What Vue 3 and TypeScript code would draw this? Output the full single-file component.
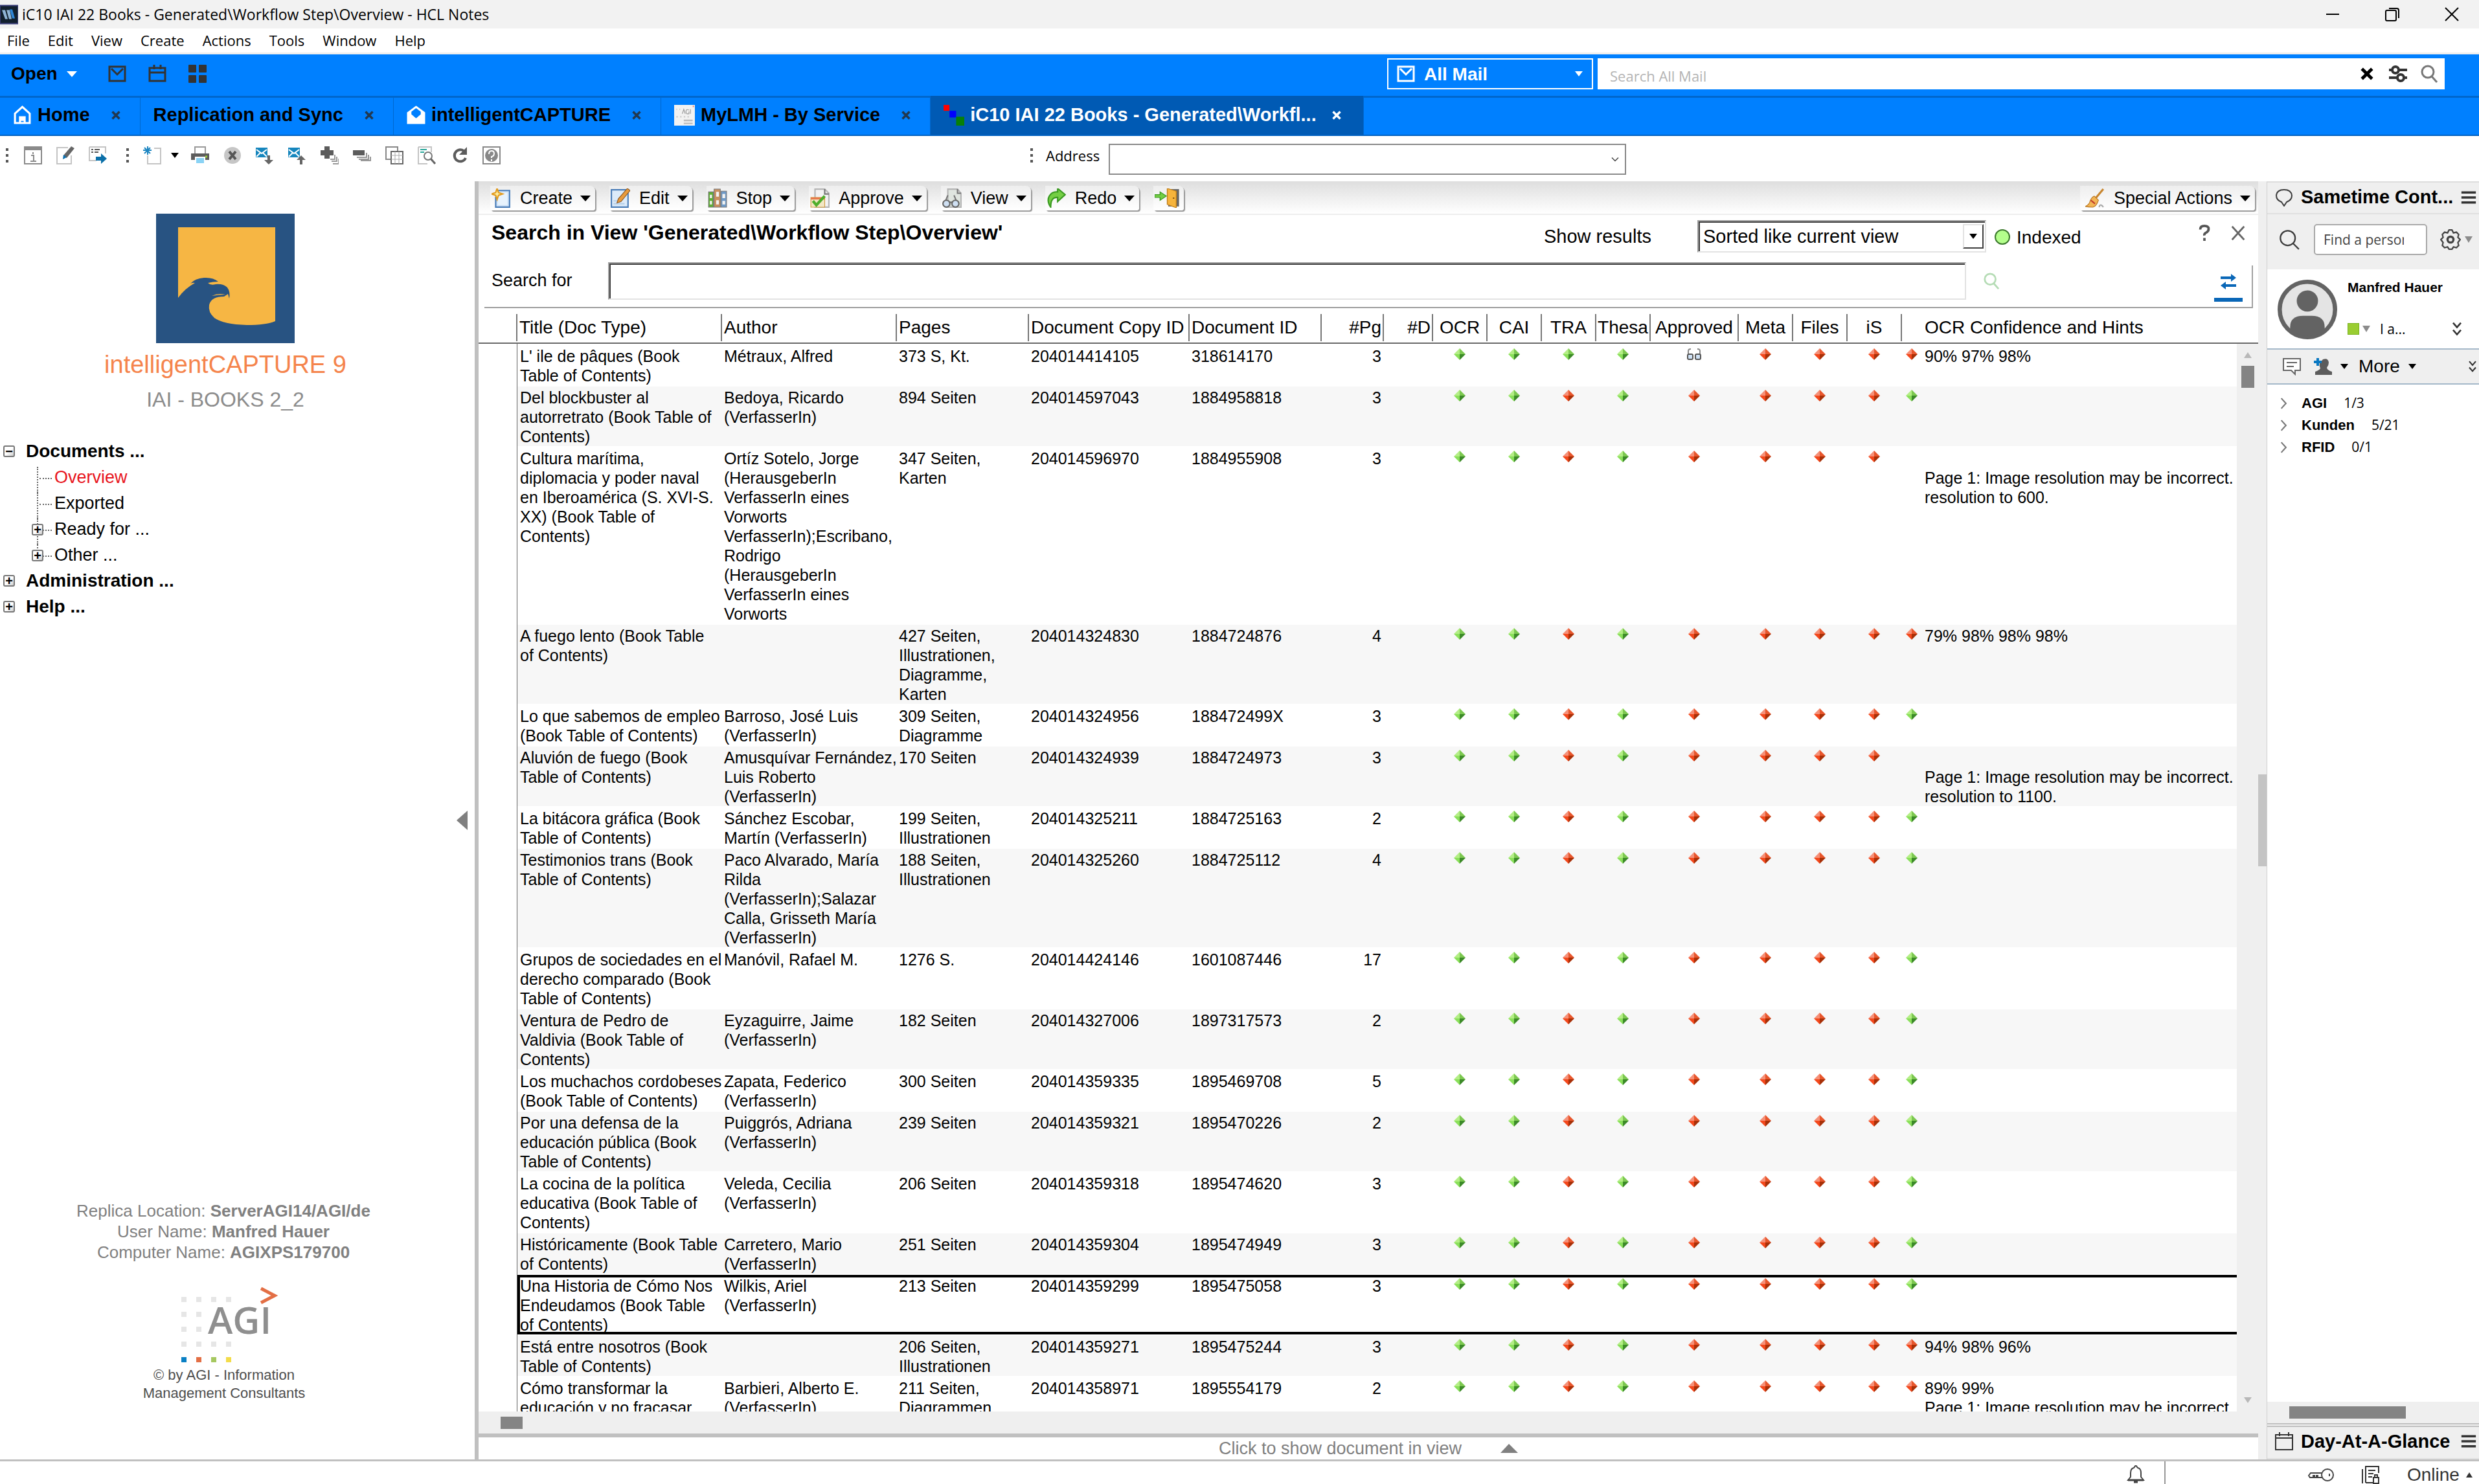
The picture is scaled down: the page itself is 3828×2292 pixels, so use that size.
<script setup lang="ts">
import { ref } from 'vue'

interface Tab { label: string; icon?: string; active?: boolean }
interface Action { label: string; icon: string }
interface Row {
  title: string; author: string; pages: string; copyId: string; docId: string
  pg: number; status: string; hints?: string; selected?: boolean
}

const menus = ['File', 'Edit', 'View', 'Create', 'Actions', 'Tools', 'Window', 'Help']

const tabs: Tab[] = [
  { label: 'Home', icon: 'home' },
  { label: 'Replication and Sync' },
  { label: 'intelligentCAPTURE', icon: 'openMail' },
  { label: 'MyLMH - By Service', icon: 'agiPage' },
  { label: 'iC10 IAI 22 Books - Generated\\Workfl...', icon: 'steps', active: true },
]

const tools = ['print', 'stop', 'mailDown', 'mailUp', 'plus', 'minus', 'copy', 'findDoc', 'reload', 'help']

const actions: Action[] = [
  { label: 'Create', icon: 'create' },
  { label: 'Edit', icon: 'editDoc' },
  { label: 'Stop', icon: 'binders' },
  { label: 'Approve', icon: 'approve' },
  { label: 'View', icon: 'viewDoc' },
  { label: 'Redo', icon: 'redo' },
]

const columns = [
  { label: '', width: 60 },
  { label: 'Title (Doc Type)', width: 316 },
  { label: 'Author', width: 270 },
  { label: 'Pages', width: 204 },
  { label: 'Document Copy ID', width: 248 },
  { label: 'Document ID', width: 204 },
  { label: '#Pg', width: 96, align: 'right' },
  { label: '#D', width: 76, align: 'right' },
  { label: 'OCR', width: 84, align: 'center' },
  { label: 'CAI', width: 84, align: 'center' },
  { label: 'TRA', width: 84, align: 'center' },
  { label: 'Thesa', width: 84, align: 'center' },
  { label: 'Approved', width: 136, align: 'center' },
  { label: 'Meta', width: 84, align: 'center' },
  { label: 'Files', width: 84, align: 'center' },
  { label: 'iS', width: 84, align: 'center' },
]

const usual = 'ggrgrrrrg'
const rows: Row[] = [
  { title: "L' ile de pâques (Book\nTable of Contents)", author: 'Métraux, Alfred', pages: '373 S, Kt.', copyId: '204014414105', docId: '318614170', pg: 3, status: 'ggggvrrrr', hints: '90% 97% 98%' },
  { title: 'Del blockbuster al\nautorretrato (Book Table of\nContents)', author: 'Bedoya, Ricardo\n(VerfasserIn)', pages: '894 Seiten', copyId: '204014597043', docId: '1884958818', pg: 3, status: usual },
  { title: 'Cultura marítima,\ndiplomacia y poder naval\nen Iberoamérica (S. XVI-S.\nXX) (Book Table of\nContents)', author: 'Ortíz Sotelo, Jorge\n(HerausgeberIn\nVerfasserIn eines\nVorworts\nVerfasserIn);Escribano,\nRodrigo\n(HerausgeberIn\nVerfasserIn eines\nVorworts', pages: '347 Seiten,\nKarten', copyId: '204014596970', docId: '1884955908', pg: 3, status: 'ggrgrrrr-', hints: '\nPage 1: Image resolution may be incorrect. P\nresolution to 600.' },
  { title: 'A fuego lento (Book Table\nof Contents)', author: '', pages: '427 Seiten,\nIllustrationen,\nDiagramme,\nKarten', copyId: '204014324830', docId: '1884724876', pg: 4, status: 'ggrgrrrrr', hints: '79% 98% 98% 98%' },
  { title: 'Lo que sabemos de empleo\n(Book Table of Contents)', author: 'Barroso, José Luis\n(VerfasserIn)', pages: '309 Seiten,\nDiagramme', copyId: '204014324956', docId: '188472499X', pg: 3, status: usual },
  { title: 'Aluvión de fuego (Book\nTable of Contents)', author: 'Amusquívar Fernández,\nLuis Roberto\n(VerfasserIn)', pages: '170 Seiten', copyId: '204014324939', docId: '1884724973', pg: 3, status: 'ggrgrrrr-', hints: '\nPage 1: Image resolution may be incorrect. P\nresolution to 1100.' },
  { title: 'La bitácora gráfica (Book\nTable of Contents)', author: 'Sánchez Escobar,\nMartín (VerfasserIn)', pages: '199 Seiten,\nIllustrationen', copyId: '204014325211', docId: '1884725163', pg: 2, status: usual },
  { title: 'Testimonios trans (Book\nTable of Contents)', author: 'Paco Alvarado, María\nRilda\n(VerfasserIn);Salazar\nCalla, Grisseth María\n(VerfasserIn)', pages: '188 Seiten,\nIllustrationen', copyId: '204014325260', docId: '1884725112', pg: 4, status: usual },
  { title: 'Grupos de sociedades en el\nderecho comparado (Book\nTable of Contents)', author: 'Manóvil, Rafael M.', pages: '1276 S.', copyId: '204014424146', docId: '1601087446', pg: 17, status: usual },
  { title: 'Ventura de Pedro de\nValdivia (Book Table of\nContents)', author: 'Eyzaguirre, Jaime\n(VerfasserIn)', pages: '182 Seiten', copyId: '204014327006', docId: '1897317573', pg: 2, status: usual },
  { title: 'Los muchachos cordobeses\n(Book Table of Contents)', author: 'Zapata, Federico\n(VerfasserIn)', pages: '300 Seiten', copyId: '204014359335', docId: '1895469708', pg: 5, status: usual },
  { title: 'Por una defensa de la\neducación pública (Book\nTable of Contents)', author: 'Puiggrós, Adriana\n(VerfasserIn)', pages: '239 Seiten', copyId: '204014359321', docId: '1895470226', pg: 2, status: usual },
  { title: 'La cocina de la política\neducativa (Book Table of\nContents)', author: 'Veleda, Cecilia\n(VerfasserIn)', pages: '206 Seiten', copyId: '204014359318', docId: '1895474620', pg: 3, status: usual },
  { title: 'Históricamente (Book Table\nof Contents)', author: 'Carretero, Mario\n(VerfasserIn)', pages: '251 Seiten', copyId: '204014359304', docId: '1895474949', pg: 3, status: usual },
  { title: 'Una Historia de Cómo Nos\nEndeudamos (Book Table\nof Contents)', author: 'Wilkis, Ariel\n(VerfasserIn)', pages: '213 Seiten', copyId: '204014359299', docId: '1895475058', pg: 3, status: usual, selected: true },
  { title: 'Está entre nosotros (Book\nTable of Contents)', author: '', pages: '206 Seiten,\nIllustrationen', copyId: '204014359271', docId: '1895475244', pg: 3, status: 'ggrgrrrrr', hints: '94% 98% 96%' },
  { title: 'Cómo transformar la\neducación y no fracasar', author: 'Barbieri, Alberto E.\n(VerfasserIn)', pages: '211 Seiten,\nDiagrammen', copyId: '204014358971', docId: '1895554179', pg: 2, status: 'ggrgrrrrr', hints: '89% 99%\nPage 1: Image resolution may be incorrect. P' },
]

const groups = [
  { name: 'AGI', count: '1/3' },
  { name: 'Kunden', count: '5/21' },
  { name: 'RFID', count: '0/1' },
]

const logoDots = [0, 1, 2, 3].flatMap(r => [0, 1, 2, 3]
  .filter(c => c < 2 || r === 0 || r === 3)
  .map(c => ({ x: c * 23, y: 15 + r * 23 })))
const logoColors = ['#0a80c4', '#e36f45', '#a6c860', '#f3dc4a']

const query = ref('')
const mailQuery = ref('')
const person = ref('')

/* Glyph bodies, all on a 28 x 28 grid */
const glyphs: Record<string, string> = {
  app: '<rect width="28" height="28" fill="#12202e" stroke="#3b3f7a" stroke-width="2"/><path d="M3 7h5l4 14H8zM10 7h5l3 14h-4z" fill="#8fb4d6"/><path d="M15 6h4l4 14h-4z" fill="#2f86d8"/>',
  mail: '<rect x="2" y="3" width="24" height="22" fill="none" stroke="currentColor" stroke-width="3"/><path d="M5 6l9 9 9-9" fill="none" stroke="currentColor" stroke-width="3"/>',
  calendar: '<path d="M2 5h24v20H2zM2 12h24" fill="none" stroke="currentColor" stroke-width="3"/><path d="M9 0v7M19 0v7" stroke="currentColor" stroke-width="3"/>',
  grid: '<rect width="12" height="12" rx="1" fill="currentColor"/><rect x="16" width="12" height="12" rx="1" fill="currentColor"/><rect y="16" width="12" height="12" rx="1" fill="currentColor"/><rect x="16" y="16" width="12" height="12" rx="1" fill="currentColor"/>',
  home: '<path d="M3 12L14 2l11 10v14H3z" fill="none" stroke="#fff" stroke-width="3"/><path d="M9 27V16h10v11h-3v-4h-4v4z" fill="#fff"/>',
  openMail: '<path d="M2 11L14 2l12 9v15H2z" fill="none" stroke="#fff" stroke-width="3"/><path d="M2 11l5-3v5l7 6 7-6V8l5 3v15H2z" fill="#fff"/>',
  agiPage: '<rect width="28" height="28" fill="#f2f2f2"/><path d="M11 12l2-6 2 6M20 7q-4-2-4 2t4 3V9M22 6v6" fill="none" stroke="#999" stroke-width="1"/><path d="M3 16h2M8 16h2M13 16h2M18 16h2M3 6h1M7 6h1" stroke="#ccc" stroke-width="2"/><path d="M13 21h12M13 25h12" stroke="#bbb" stroke-width="2"/><rect x="25" y="1" width="2" height="2" fill="#e98"/>',
  steps: '<rect width="8" height="8" fill="#f00"/><rect x="8" y="8" width="9" height="9" fill="#00f"/><rect x="17" y="16" width="11" height="12" fill="#078007"/>',
  info: '<rect x="1" y="1" width="26" height="26" fill="#fff" stroke="#8a8a8a" stroke-width="2"/><rect width="28" height="6" fill="#8a8a8a"/><path d="M11 14h4v9M10 23h9M14 9v3" fill="none" stroke="#8a8a8a" stroke-width="2"/>',
  pencil: '<path d="M18 2H1v25h22V14" fill="none" stroke="#c4c4c4" stroke-width="2"/><path d="M23 0l5 3-12 15-5-4z" fill="#666"/><path d="M11 13l5 4-6 3z" fill="#0a6fb0"/>',
  sendDoc: '<path d="M1 1h25v10M1 1v21h11" fill="none" stroke="#c4c4c4" stroke-width="2"/><path d="M4 5h3M9 5h8M4 9h3M9 9h6" stroke="#555" stroke-width="2"/><path d="M11 16h8v-5l9 8-9 8v-5h-8z" fill="#0a6fa8"/>',
  newDoc: '<path d="M17 3h10v24H7V14" fill="none" stroke="#c4c4c4" stroke-width="2"/><path d="M7 0v13M0 6h13M2 2l9 9M11 2l-9 9" stroke="#1a84c0" stroke-width="2"/>',
  print: '<path d="M6 1h16v11H6z" fill="#fff" stroke="#999" stroke-width="2"/><path d="M0 11h28v10H0z" fill="#5c5c5c"/><path d="M22 16h3" stroke="#9c3" stroke-width="3"/><path d="M7 17h14v10H7z" fill="#8ad3f5" stroke="#fff" stroke-width="2"/>',
  stop: '<circle cx="14" cy="14" r="13" fill="#c6c6c6"/><path d="M9 8l10 12M19 8L9 20" stroke="#555" stroke-width="4"/>',
  mailDown: '<path d="M0 2h18v15H0z" fill="#1686bd"/><path d="M1 5l8 6 8-6M1 16l6-6M17 16l-6-6" fill="none" stroke="#fff" stroke-width="2"/><path d="M18 14h4v7h5l-7 7-7-7h5z" fill="#666"/>',
  mailUp: '<path d="M0 2h18v15H0z" fill="#1686bd"/><path d="M1 5l8 6 8-6M1 16l6-6M17 16l-6-6" fill="none" stroke="#fff" stroke-width="2"/><path d="M18 28h4v-7h5l-7-7-7 7h5z" fill="#666"/>',
  plus: '<path d="M6 0h8v6h6v8h-6v5H6v-5H0V6h6z" fill="#5c5c5c"/><path d="M22 13v7h-7M25 16v7h-8M28 19v8h-9" fill="none" stroke="#999" stroke-width="2"/>',
  minus: '<path d="M0 6h18v8H0z" fill="#5c5c5c"/><path d="M21 10v7H6M24 13v7H9M27 16v6H12" fill="none" stroke="#999" stroke-width="2"/>',
  copy: '<path d="M1 1h18v19H1z" fill="#fff" stroke="#888" stroke-width="2"/><path d="M9 8h18v19H9z" fill="#fff" stroke="#666" stroke-width="2"/><path d="M9 14h18M9 20h18M15 8v19M21 8v19" stroke="#aaa" stroke-width="1"/>',
  findDoc: '<path d="M1 1h20v8M1 1v26h14" fill="none" stroke="#c4c4c4" stroke-width="2"/><path d="M4 5h10M4 9h6" stroke="#2aa79a" stroke-width="2"/><circle cx="16" cy="15" r="6" fill="#fff" stroke="#777" stroke-width="2"/><path d="M20 19l7 8" stroke="#666" stroke-width="3"/>',
  reload: '<path d="M21 7a9 9 0 1 0 3 11" fill="none" stroke="#5c5c5c" stroke-width="4"/><path d="M26 1v12H14z" fill="#5c5c5c"/>',
  help: '<rect x="1" y="1" width="26" height="26" fill="#fff" stroke="#888" stroke-width="2"/><circle cx="14" cy="14" r="10" fill="#888"/><path d="M10 12q0-5 4-5t4 4-4 5v2M14 20v3" fill="none" stroke="#fff" stroke-width="2"/>',
  create: '<path d="M8 3h18v24H6V12" fill="#cfe3f8" stroke="#4a7db8" stroke-width="2"/><path d="M9 6h14v18H9z" fill="#e8f3fd"/><path d="M8 0l2 6 6 2-6 2-2 6-2-6-6-2 6-2z" fill="#fff2a8" stroke="#e29a1c" stroke-width="2"/>',
  editDoc: '<path d="M1 2h24v25H1z" fill="#dcebfa" stroke="#4a7db8" stroke-width="2"/><path d="M4 22h16M4 18h6" stroke="#b5cfe8" stroke-width="2"/><path d="M24 0l4 3-13 16-6 2 2-6z" fill="#e89b3d" stroke="#8a5620" stroke-width="1"/>',
  binders: '<path d="M1 5h7v22H1z" fill="#5fae35" stroke="#777"/><path d="M9 1h9v26H9z" fill="#c98f5e" stroke="#777"/><path d="M19 4h8v23h-8z" fill="#6f9ac7" stroke="#777"/><path d="M3 9h3v5H3zM12 5h4v7h-4zM21 8h4v6h-4zM3 18h3v5H3zM12 17h4v6h-4zM21 18h4v5h-4z" fill="#f3f3f3"/>',
  approve: '<path d="M7 1h14l6 6v20H7z" fill="#f3f3f3" stroke="#b5b5b5" stroke-width="2"/><path d="M21 1v7h6" fill="none" stroke="#777" stroke-width="2"/><path d="M1 13h20v14H1z" fill="#f2e7c4" stroke="#cf9a3c" stroke-width="1"/><path d="M1 13h20v3H1z" fill="#e77a4c"/><path d="M4 18l5 6L21 11" fill="none" stroke="#4fae2c" stroke-width="4"/>',
  viewDoc: '<path d="M8 1h14l5 6v20H8z" fill="#dfe5df" stroke="#b5b5b5" stroke-width="2"/><path d="M22 1v6h5" fill="none" stroke="#777" stroke-width="2"/><path d="M4 20l4-10M21 20l-4-10" stroke="#777" stroke-width="2"/><circle cx="6" cy="22" r="5" fill="#cfe0f3" stroke="#666" stroke-width="2"/><circle cx="19" cy="22" r="5" fill="#cfe0f3" stroke="#666" stroke-width="2"/><path d="M11 20h3" stroke="#666" stroke-width="2"/>',
  redo: '<path d="M6 27Q0 18 4 11t12-6V0l11 9-11 10v-6Q6 12 6 27z" fill="#74ce44" stroke="#3b9a22" stroke-width="2"/>',
  exit: '<path d="M15 1h12v25H15z" fill="#666"/><path d="M14 0l10 4v24l-10-5z" fill="#f6b43c" stroke="#c07d16" stroke-width="1"/><circle cx="21" cy="14" r="1" fill="#7a4b0c"/><path d="M0 9h6V5l7 6-7 6v-4H0z" fill="#74ce44" stroke="#3b9a22" stroke-width="1"/>',
  broom: '<path d="M26 1L15 14" stroke="#c8862f" stroke-width="3"/><path d="M13 11l6 6q-3 9-8 10-7 0-11-1 6-3 7-8 2-5 6-7z" fill="#f3b555" stroke="#b87722" stroke-width="1"/><path d="M8 17l6 5" stroke="#c0392b" stroke-width="2"/><path d="M20 27q1-4 3-3t3 3" fill="none" stroke="#aaa" stroke-width="2"/>',
  search: '<circle cx="12" cy="11" r="9" fill="none" stroke="currentColor" stroke-width="3"/><path d="M18 18l8 9" stroke="currentColor" stroke-width="3"/>',
  thinSearch: '<circle cx="12" cy="12" r="10" fill="none" stroke="#3c3c3c" stroke-width="2"/><path d="M19 19l8 8" stroke="#3c3c3c" stroke-width="2"/>',
  sliders: '<path d="M0 8h28M0 20h28" stroke="currentColor" stroke-width="4"/><circle cx="10" cy="8" r="5" fill="#fff" stroke="currentColor" stroke-width="4"/><circle cx="18" cy="20" r="5" fill="#fff" stroke="currentColor" stroke-width="4"/>',
  swap: '<path d="M2 8h20M6 20h20" stroke="#0a67b7" stroke-width="4"/><path d="M18 2l8 6-8 6zM10 14l-8 6 8 6z" fill="#0a67b7"/>',
  cross: '<path d="M3 3l22 22M25 3L3 25" stroke="currentColor" stroke-width="7"/>',
  thinCross: '<path d="M4 3l20 22M24 3L4 25" stroke="currentColor" stroke-width="3"/>',
  closeWin: '<path d="M4 4l20 20M24 4L4 24" stroke="#000" stroke-width="2"/>',
  minWin: '<path d="M4 14h20" stroke="#000" stroke-width="2"/>',
  maxWin: '<rect x="4" y="8" width="16" height="16" rx="2" fill="none" stroke="#000" stroke-width="2"/><path d="M9 5h12q3 0 3 3v12" fill="none" stroke="#000" stroke-width="2"/>',
  question: '<path d="M7 8q0-6 7-6t7 5q0 4-4 6t-3 5M14 22v5" fill="none" stroke="#555" stroke-width="4"/>',
  bubble: '<path d="M14 27l-4-6Q2 18 2 11 3 2 14 2t12 9q0 7-8 10z" fill="none" stroke="#3c3c3c" stroke-width="2"/>',
  burger: '<path d="M1 5h26M1 14h26M1 23h26" stroke="#333" stroke-width="4"/>',
  gear: '<path d="M10 5l2-4h4l2 4 4-1 3 3-1 4 3 3-3 4 1 4-3 3-4-1-2 3h-4l-2-3-4 1-3-3 1-4-3-4 3-3-1-4 3-3z" fill="none" stroke="#444" stroke-width="2"/><circle cx="14" cy="14" r="4" fill="none" stroke="#444" stroke-width="3"/>',
  chat: '<path d="M1 2h26v18h-8v6l-6-6H1z" fill="#fff" stroke="#666" stroke-width="2"/><path d="M6 8h16M6 14h11" stroke="#666" stroke-width="2"/>',
  addPerson: '<path d="M14 3q8-3 9 5 0 4-3 8 1 4 8 6v5H2v-5q6-2 8-5-2-4-1-8z" fill="#5c5c5c"/><path d="M6 1v12M0 7h12" stroke="#0a78c2" stroke-width="4"/>',
  downs: '<path d="M7 3l7 8 7-8M7 16l7 8 7-8" fill="none" stroke="#333" stroke-width="3"/>',
  right: '<path d="M8 3l10 11L8 25" fill="none" stroke="#777" stroke-width="3"/>',
  thinDown: '<path d="M4 9l10 10L24 9" fill="none" stroke="#444" stroke-width="3"/>',
  calThin: '<path d="M1 4h26v23H1zM1 9h26M7 0v6M21 0v6" fill="none" stroke="#333" stroke-width="2"/>',
  bell: '<path d="M2 23h24l-4-5V12q0-7-5-8l-3-4-3 4q-5 1-5 8v6z" fill="#fff" stroke="#444" stroke-width="2"/><path d="M2 23h24M11 26h6" stroke="#444" stroke-width="3"/>',
  key: '<circle cx="30" cy="11" r="9" fill="none" stroke="#444" stroke-width="2"/><path d="M21 8H4l-3 4 2 3h5v-3h2v3h3v-3h2v3h7" fill="none" stroke="#444" stroke-width="2"/><path d="M33 9v4" stroke="#444" stroke-width="2"/>',
  note: '<path d="M2 5v22M7 26V1h20v10M7 26h11" fill="none" stroke="#333" stroke-width="2"/><path d="M11 7h11M11 12h8M11 17h6" stroke="#333" stroke-width="2"/><path d="M19 18h8v9h-8zM21 18v-4h4v4" fill="none" stroke="#333" stroke-width="2"/>',
  avatar: '<circle cx="14" cy="14" r="13" fill="#e4e4e4" stroke="#636363" stroke-width="2"/><circle cx="14" cy="10" r="5" fill="#636363"/><path d="M6 24q-1-7 6-7h4q7 0 6 7-8 5-16 0z" fill="#636363"/>',
}
</script>

<template>
  <div class="window">
    <header class="titlebar">
      <svg class="app-icon" viewBox="0 0 28 28" v-html="glyphs.app" />
      <span class="window-title">iC10 IAI 22 Books - Generated\Workflow Step\Overview - HCL Notes</span>
      <div class="window-buttons">
        <button aria-label="Minimize"><svg class="g28" viewBox="0 0 28 28" v-html="glyphs.minWin" /></button>
        <button aria-label="Restore"><svg class="g28" viewBox="0 0 28 28" v-html="glyphs.maxWin" /></button>
        <button aria-label="Close"><svg class="g28" viewBox="0 0 28 28" v-html="glyphs.closeWin" /></button>
      </div>
    </header>

    <nav class="menubar">
      <button v-for="m in menus" :key="m">{{ m }}</button>
    </nav>

    <div class="openbar">
      <button class="open">Open <i class="tri white" /></button>
      <div class="quick">
        <button aria-label="Mail"><svg class="g28" viewBox="0 0 28 28" v-html="glyphs.mail" /></button>
        <button aria-label="Calendar"><svg class="g28" viewBox="0 0 28 28" v-html="glyphs.calendar" /></button>
        <button aria-label="Workspace"><svg class="g28" viewBox="0 0 28 28" v-html="glyphs.grid" /></button>
      </div>
      <div class="scope">
        <svg class="g28" viewBox="0 0 28 28" v-html="glyphs.mail" />
        <select aria-label="Search scope"><option>All Mail</option></select>
        <i class="tri small white" />
      </div>
      <div class="mail-search">
        <input v-model="mailQuery" type="text" placeholder="Search All Mail" aria-label="Search All Mail">
        <button class="clear" aria-label="Clear"><svg class="g20" viewBox="0 0 28 28" v-html="glyphs.cross" /></button>
        <button class="opts" aria-label="Search options"><svg class="g28" viewBox="0 0 28 28" v-html="glyphs.sliders" /></button>
        <button class="go" aria-label="Search"><svg class="g28" viewBox="0 0 28 28" v-html="glyphs.search" /></button>
      </div>
    </div>

    <nav class="tabs">
      <div v-for="t in tabs" :key="t.label" class="tab" :class="{ active: t.active }">
        <svg v-if="t.icon" class="tab-icon" :class="t.icon" viewBox="0 0 28 28" v-html="glyphs[t.icon]" />
        <a href="#">{{ t.label }}</a>
        <button aria-label="Close tab"><svg class="g14" viewBox="0 0 28 28" v-html="glyphs.cross" /></button>
      </div>
    </nav>

    <div class="toolbar">
      <i class="grip" />
      <div class="tool-group">
        <button aria-label="Properties"><svg class="g28" viewBox="0 0 28 28" v-html="glyphs.info" /></button>
        <button aria-label="Edit"><svg class="g28" viewBox="0 0 28 28" v-html="glyphs.pencil" /></button>
        <button aria-label="Forward"><svg class="g28" viewBox="0 0 28 28" v-html="glyphs.sendDoc" /></button>
      </div>
      <i class="grip" />
      <button class="new-doc" aria-label="New"><svg class="g28" viewBox="0 0 28 28" v-html="glyphs.newDoc" /><i class="tri small" /></button>
      <div class="tool-group">
        <button v-for="t in tools" :key="t" :aria-label="t"><svg class="g28" viewBox="0 0 28 28" v-html="glyphs[t]" /></button>
      </div>
      <div class="address">
        <i class="grip" />
        <label for="address">Address</label>
        <div class="address-box">
          <select id="address"><option value="" /></select>
          <svg class="g14" viewBox="0 0 28 28" v-html="glyphs.thinDown" />
        </div>
      </div>
    </div>

    <div class="workspace">
      <aside class="sidebar">
        <div class="side-content">
          <svg class="brand" viewBox="0 0 214 200">
            <rect width="214" height="200" fill="#285382" />
            <path d="M34 21H184V166Q170 172 140 172Q104 171 90 161Q80 152 82 141Q85 128 105 128L111 124L113 131Q115 121 110 114Q104 108 92 109Q84 111 80 107Q88 105 96 105Q88 98 74 99Q60 100 53 108Q57 106 60 107Q45 115 34 130Z" fill="#f6b644" />
            <path d="M86 127Q96 122 107 125Q97 125 86 127Z" fill="#f6b644" />
          </svg>
          <h1>intelligentCAPTURE 9</h1>
          <p class="subtitle">IAI - BOOKS 2_2</p>
          <ul class="tree">
            <li class="top"><button class="box" aria-label="Collapse">−</button><a href="#">Documents ...</a></li>
            <li class="sub"><i class="twig" /><a href="#" class="current">Overview</a></li>
            <li class="sub"><i class="twig" /><a href="#">Exported</a></li>
            <li class="sub"><i class="twig" /><button class="box" aria-label="Expand">+</button><a href="#">Ready for ...</a></li>
            <li class="sub last"><i class="twig" /><button class="box" aria-label="Expand">+</button><a href="#">Other ...</a></li>
            <li class="top"><button class="box" aria-label="Expand">+</button><a href="#">Administration ...</a></li>
            <li class="top"><button class="box" aria-label="Expand">+</button><a href="#">Help ...</a></li>
          </ul>
          <div class="side-info">
            <p>Replica Location: <b>ServerAGI14/AGI/de</b></p>
            <p>User Name: <b>Manfred Hauer</b></p>
            <p>Computer Name: <b>AGIXPS179700</b></p>
          </div>
          <svg class="agi" viewBox="0 0 148 116">
            <rect v-for="(d, i) in logoDots" :key="i" :x="d.x" :y="d.y" width="8" height="8" fill="#e6e6e6" />
            <rect v-for="(c, i) in logoColors" :key="c" :x="i * 23" y="108" width="8" height="8" :fill="c" />
            <text x="41" y="72" font-family="Open Sans, sans-serif" font-size="58" font-weight="600" fill="#8f8f8f">AGI</text>
            <path d="M123 2L144 13L123 24" fill="none" stroke="#e36f45" stroke-width="5" />
          </svg>
          <p class="copyright">© by AGI - Information<br>Management Consultants</p>
        </div>
        <button class="collapse" aria-label="Collapse navigator"><svg width="17" height="30" viewBox="0 0 17 30"><path d="M17 0v30L0 15z" fill="#808080" /></svg></button>
      </aside>

      <main class="main">
        <div class="actionbar">
          <button v-for="a in actions" :key="a.label" class="action">
            <svg class="act-icon" viewBox="0 0 28 28" v-html="glyphs[a.icon]" />{{ a.label }}<i class="tri" />
          </button>
          <button class="action exit" aria-label="Exit"><svg class="act-icon" viewBox="0 0 28 28" preserveAspectRatio="none" v-html="glyphs.exit" /></button>
          <button class="action special"><svg class="act-icon" viewBox="0 0 28 28" v-html="glyphs.broom" />Special Actions<i class="tri" /></button>
        </div>

        <section class="search-panel">
          <div class="search-top">
            <h2>Search in View 'Generated\Workflow Step\Overview'</h2>
            <label for="sort" class="show">Show results</label>
            <div class="sort-box">
              <select id="sort"><option>Sorted like current view</option></select>
              <span class="drop"><i class="tri small" /></span>
            </div>
            <i class="indexed-dot" />
            <span class="indexed">Indexed</span>
            <button aria-label="Help" class="hint"><svg class="g26" viewBox="0 0 28 28" v-html="glyphs.question" /></button>
            <button aria-label="Close search" class="close"><svg class="g26" viewBox="0 0 28 28" v-html="glyphs.thinCross" /></button>
          </div>
          <div class="search-bottom">
            <label for="query">Search for</label>
            <input id="query" v-model="query" type="text">
            <button class="find" aria-label="Find"><svg class="g26" viewBox="0 0 28 28" v-html="glyphs.search" /></button>
            <div class="toggle-zone">
              <button aria-label="More options"><svg class="g28" viewBox="0 0 28 28" v-html="glyphs.swap" /></button>
            </div>
          </div>
        </section>

        <div class="view">
          <div class="table-clip">
            <table>
              <colgroup>
                <col v-for="(c, i) in columns" :key="i" :style="{ width: c.width + 'px' }">
                <col class="conf-col">
                <col>
              </colgroup>
              <thead>
                <tr>
                  <th v-for="(c, i) in columns" :key="i" :class="c.align"><div>{{ c.label }}</div></th>
                  <th />
                  <th>OCR Confidence and Hints</th>
                </tr>
              </thead>
              <tbody>
                <tr v-for="r in rows" :key="r.copyId" :class="{ selected: r.selected }">
                  <td class="gutter" />
                  <td class="title">{{ r.title }}</td>
                  <td>{{ r.author }}</td>
                  <td>{{ r.pages }}</td>
                  <td>{{ r.copyId }}</td>
                  <td>{{ r.docId }}</td>
                  <td class="right">{{ r.pg }}</td>
                  <td />
                  <td v-for="(s, i) in r.status.split('')" :key="i" class="state">
                    <svg v-if="s === 'g'" width="18" height="18" viewBox="0 0 18 18"><path d="M9 0v9H0z" fill="#b4ee86" /><path d="M9 0l9 9H9z" fill="#7cc850" /><path d="M0 9h9v9z" fill="#8ae05a" /><path d="M9 9h9l-9 9z" fill="#3c8a28" /></svg>
                    <svg v-else-if="s === 'r'" width="18" height="18" viewBox="0 0 18 18"><path d="M9 0v9H0z" fill="#f59078" /><path d="M9 0l9 9H9z" fill="#e8562c" /><path d="M0 9h9v9z" fill="#f4481c" /><path d="M9 9h9l-9 9z" fill="#a83008" /></svg>
                    <svg v-else-if="s === 'v'" width="22" height="18" viewBox="0 0 22 18"><path d="M2 10V4q0-3 4-3M20 10V4q0-3-4-3" fill="none" stroke="#888" stroke-width="2" /><rect x="1" y="9" width="8" height="8" rx="2" fill="#cfe2f6" stroke="#555" stroke-width="2" /><rect x="13" y="9" width="8" height="8" rx="2" fill="#cfe2f6" stroke="#555" stroke-width="2" /></svg>
                  </td>
                  <td class="hints">{{ r.hints }}</td>
                </tr>
              </tbody>
            </table>
          </div>
          <div class="vrail">
            <div class="rail-head" />
            <div class="rail">
              <i class="tri pale up" />
              <i class="thumb" />
              <i class="tri pale" />
            </div>
          </div>
        </div>
        <div class="hrail"><i /></div>
        <button class="show-doc">Click to show document in view <svg width="27" height="14" viewBox="0 0 27 14"><path d="M0 14L13 0l14 14z" fill="#808080" /></svg></button>
      </main>

      <div class="splitter"><i /></div>

      <aside class="sametime">
        <div class="pane-head">
          <svg class="g28" viewBox="0 0 28 28" v-html="glyphs.bubble" />
          <h3>Sametime Cont...</h3>
          <button aria-label="Pane menu"><svg class="g24" viewBox="0 0 28 28" v-html="glyphs.burger" /></button>
        </div>
        <div class="person-search">
          <svg class="g32" viewBox="0 0 28 28" v-html="glyphs.thinSearch" />
          <input v-model="person" type="text" placeholder="Find a person" aria-label="Find a person">
          <button aria-label="Settings"><svg class="g32" viewBox="0 0 28 28" v-html="glyphs.gear" /><i class="tri grey" /></button>
        </div>
        <div class="me">
          <svg class="avatar" viewBox="0 0 28 28" v-html="glyphs.avatar" />
          <div class="me-text">
            <b>Manfred Hauer</b>
            <div class="presence"><i class="square" /><i class="tri grey" /><span>I a...</span><svg class="g24" viewBox="0 0 28 28" v-html="glyphs.downs" /></div>
          </div>
        </div>
        <div class="pane-tools">
          <button aria-label="Chat"><svg class="g28" viewBox="0 0 28 28" v-html="glyphs.chat" /></button>
          <button class="add" aria-label="Add contact"><svg class="g28" viewBox="0 0 28 28" v-html="glyphs.addPerson" /><i class="tri small" /></button>
          <button class="more">More<i class="tri small" /></button>
          <svg class="g20" viewBox="0 0 28 28" v-html="glyphs.downs" />
        </div>
        <ul class="groups">
          <li v-for="g in groups" :key="g.name"><svg class="g20" viewBox="0 0 28 28" v-html="glyphs.right" /><b>{{ g.name }}</b><span>{{ g.count }}</span></li>
        </ul>
        <div class="pane-scroll"><i /></div>
        <div class="pane-head day">
          <svg class="g28" viewBox="0 0 28 28" v-html="glyphs.calThin" />
          <h3>Day-At-A-Glance</h3>
          <button aria-label="Pane menu"><svg class="g24" viewBox="0 0 28 28" v-html="glyphs.burger" /></button>
        </div>
      </aside>
    </div>

    <footer class="status">
      <button class="bell" aria-label="Notifications"><svg class="g28" viewBox="0 0 28 28" v-html="glyphs.bell" /></button>
      <div class="status-right">
        <svg class="key" viewBox="0 0 40 22" v-html="glyphs.key" />
        <svg class="g28" viewBox="0 0 28 28" v-html="glyphs.note" />
        <button class="online">Online<i class="tri up-small" /></button>
      </div>
    </footer>
  </div>
</template>

<style>
html, body { margin: 0; background: #fff; }
</style>

<style scoped>
.window { display: flex; flex-direction: column; height: 100vh; overflow: hidden; background: #fff; color: #000; font-family: "Liberation Sans", Arial, sans-serif; font-size: 25px; }
.window *, .window *::before, .window *::after { box-sizing: border-box; }
button { display: flex; align-items: center; margin: 0; padding: 0; border: 0; background: none; color: inherit; font: inherit; white-space: nowrap; }
select, input { font: inherit; color: inherit; appearance: none; border: 0; border-radius: 0; background: none; padding: 0; margin: 0; min-width: 0; outline: 0; }
a { color: inherit; text-decoration: none; }
p, h1, h2, h3, ul { margin: 0; padding: 0; list-style: none; }
svg { display: block; flex: none; }
.g14 { width: 14px; height: 14px; }
.g20 { width: 20px; height: 20px; }
.g24 { width: 24px; height: 24px; }
.g26 { width: 26px; height: 26px; }
.g28 { width: 28px; height: 28px; }
.g32 { width: 32px; height: 32px; }
.tri { flex: none; width: 0; height: 0; border: 8px solid transparent; border-top: 9px solid #000; border-bottom: 0; }
.tri.small { border-width: 8px 6px 0; }
.tri.white { border-top-color: #fff; }
.tri.grey { border-width: 10px 6px 0; border-top-color: #8c8c8c; }
.tri.pale { border-width: 9px 6px 0; border-top-color: #b8b8b8; }
.tri.up { border-width: 0 6px 9px; border-bottom: 9px solid #b8b8b8; border-top: 0; }
.tri.up-small { border-width: 0 5px 8px; border-bottom: 8px solid #333; border-top: 0; }

.titlebar { display: flex; align-items: center; flex: none; height: 44px; background: #f2f2f2; font-family: "Open Sans", "Noto Sans", sans-serif; font-size: 23px; }
.app-icon { width: 28px; height: 31px; margin-right: 6px; }
.window-title { flex: 1; line-height: 44px; }
.window-buttons { display: flex; gap: 64px; padding-right: 28px; height: 40px; }

.menubar { display: flex; flex: none; gap: 28px; height: 40px; padding: 0 11px 2px; border-bottom: 3px solid #efefef; font-family: "Open Sans", "Noto Sans", sans-serif; font-size: 22px; }

.openbar { display: flex; align-items: center; flex: none; height: 64px; padding: 0 53px 4px 17px; background: #0080ff; font-size: 28px; font-weight: 700; }
.open { gap: 14px; }
.quick { display: flex; flex: 1; gap: 34px; margin-left: 48px; color: #333; }
.scope { display: flex; align-items: center; flex: none; width: 318px; height: 48px; padding: 0 14px 0 13px; border: 2px solid #fff; color: #fff; }
.scope select { flex: 1; margin-left: 14px; }
.mail-search { display: flex; align-items: center; flex: 0 0 1308px; height: 48px; margin-left: 7px; padding-right: 10px; background: #fff; color: #333; font-family: "Open Sans", "Noto Sans", sans-serif; font-size: 22px; font-weight: 400; }
.mail-search input { flex: 1; padding: 6px 19px 0; }
.mail-search input::placeholder { color: #b4b4b4; opacity: 1; }
.clear { color: #000; }
.opts { margin-left: 24px; }
.go { margin-left: 20px; color: #777; }

.tabs { display: flex; flex: none; height: 62px; background: #0080ff; border-top: 3px solid #0067cd; border-bottom: 2px solid #0060c0; font-size: 29px; font-weight: 700; }
.tab { display: flex; align-items: center; padding: 0 30px 4px 20px; border-right: 1px solid #0067cd; }
.tab a { margin-right: 33px; white-space: nowrap; }
.tab button { color: #22384f; }
.tab-icon { width: 29px; height: 29px; margin-right: 9px; }
.tab-icon.agiPage, .tab-icon.steps { width: 32px; height: 32px; }
.tab.active { background: #005ab4; color: #fff; margin-top: -3px; padding: 3px 34px 4px 20px; }
.tab.active a { margin-right: 24px; }
.tab.active button { color: #fff; }

.toolbar { display: flex; align-items: center; flex: none; height: 70px; padding: 0 0 10px 9px; }
.grip { flex: none; width: 4px; height: 22px; background: repeating-linear-gradient(#555 0 4px, transparent 4px 9px); }
.tool-group { display: flex; gap: 22px; margin: 0 30px 0 24px; }
.new-doc { gap: 15px; margin-left: 22px; margin-right: -5px; }
.address { display: flex; align-items: center; flex: none; margin-left: 788px; font-family: "Open Sans", "Noto Sans", sans-serif; font-size: 22px; }
.address label { margin: 0 14px 0 20px; }
.address-box { display: flex; align-items: center; width: 799px; height: 48px; margin-top: 12px; padding-right: 8px; border: 2px solid #8a8a8a; }
.address-box select { flex: 1; height: 100%; }

.workspace { display: flex; flex: 1; min-height: 0; }
.sidebar { display: flex; align-items: center; flex: none; width: 739px; border-right: 6px solid #c0c0c0; }
.side-content { display: flex; flex-direction: column; align-items: center; flex: 1; height: 100%; padding: 50px 0 88px; }
.collapse { width: 28px; margin-left: 9px; }
.brand { width: 214px; height: 200px; }
.side-content h1 { margin-top: 11px; font-size: 38px; line-height: 44px; font-weight: 400; color: #f5844c; }
.subtitle { margin-top: 12px; font-size: 32px; line-height: 40px; color: #8c8c8c; }
.tree { align-self: stretch; margin-top: 40px; font-size: 27px; line-height: 40px; }
.tree li { display: flex; align-items: center; height: 40px; }
.tree .top { padding-left: 5px; font-size: 28px; font-weight: 700; }
.tree .top .box { margin-right: 17px; }
.tree .sub { position: relative; padding-left: 84px; }
.box { justify-content: center; width: 18px; height: 18px; border: 2px solid #777; border-radius: 3px; background: linear-gradient(135deg, #fff 50%, #ccc); font-size: 20px; font-weight: 700; line-height: 14px; }
.sub .box { position: absolute; left: 49px; top: 12px; }
.twig { position: absolute; left: 57px; top: 4px; width: 22px; height: 40px; border-left: 2px dotted #666; }
.sub.last .twig { height: 14px; }
.twig::after { content: ""; position: absolute; left: 2px; top: 17px; width: 19px; border-top: 2px dotted #666; }
.current { color: #e8141c; }
.side-info { margin-top: auto; padding-right: 6px; font-size: 26px; line-height: 32px; text-align: center; color: #808080; }
.agi { width: 148px; height: 116px; margin: 38px 0 6px 12px; overflow: visible; }
.copyright { padding-right: 4px; font-size: 22px; line-height: 28px; text-align: center; color: #4d4d4d; }

.main { display: flex; flex-direction: column; flex: 1; min-width: 0; }
.actionbar { display: flex; align-items: center; gap: 22px; flex: none; height: 52px; padding: 0 5px 0 18px; border-bottom: 2px solid #eee; background: linear-gradient(#dedede, #fff); font-size: 27px; }
.action { height: 38px; margin-top: 2px; padding: 0 7px 0 2px; border-radius: 0 8px 4px 4px; background: linear-gradient(#eee, #fff); box-shadow: 2px 2px 1px #999; }
.action .tri { margin-left: 12px; }
.act-icon { width: 30px; height: 30px; margin-right: 14px; }
.action.exit { padding-right: 6px; }
.action.exit .act-icon { width: 39px; margin-right: 0; }
.action.special { margin-left: auto; padding-left: 8px; }
.search-panel { flex: none; margin: 8px 8px 0 9px; border-bottom: 2px solid #a0a0a0; }
.search-top { display: flex; align-items: center; height: 50px; padding-left: 11px; font-size: 29px; }
.search-top h2 { flex: 1; align-self: flex-start; font-size: 32px; line-height: 38px; white-space: nowrap; }
.show { margin-right: 71px; }
.sort-box { display: flex; width: 446px; height: 50px; border: 2px solid #a0a0a0; border-bottom-color: #e3e3e3; border-right-color: #e3e3e3; box-shadow: inset 2px 2px #404040; }
.sort-box select { flex: 1; padding-left: 7px; }
.drop { display: flex; align-items: center; justify-content: center; width: 32px; margin: 4px 2px; border: 2px solid #e3e3e3; border-right-color: #404040; border-bottom-color: #404040; }
.indexed-dot { width: 24px; height: 24px; margin: 2px 10px 0 13px; border: 2px solid #3d7a2e; border-radius: 50%; background: #b4ff8c; }
.indexed { width: 277px; padding-top: 4px; font-size: 28px; }
.hint { margin-bottom: 10px; }
.close { margin: 0 10px 10px 26px; color: #666; }
.search-bottom { display: flex; align-items: center; margin-top: 14px; padding: 0 0 11px 11px; font-size: 27px; }
.search-bottom label { width: 180px; }
.search-bottom input { flex: 1; height: 58px; padding: 0 10px; border: 2px solid #a0a0a0; border-right-color: #e3e3e3; border-bottom-color: #e3e3e3; box-shadow: inset 2px 2px #404040; }
.find { margin-left: 26px; color: #b5dcb5; }
.toggle-zone { display: flex; flex: none; align-items: center; justify-content: flex-end; align-self: stretch; width: 391px; margin: 6px 0 -11px; padding: 0 14px 8px 0; border-right: 2px solid #a0a0a0; }
.toggle-zone button { width: 44px; height: 56px; align-items: center; justify-content: center; border-bottom: 6px solid #0a67b7; }

.view { display: flex; flex: 1; min-height: 0; padding-top: 7px; }
.table-clip { flex: 1; min-width: 0; overflow: hidden; }
table { width: 100%; table-layout: fixed; border-collapse: separate; border-spacing: 0; line-height: 30px; }
.conf-col { width: 32px; }
th { height: 48px; padding: 2px 0; border-bottom: 2px solid #696969; font-size: 28px; font-weight: 400; text-align: left; vertical-align: top; }
th div { height: 42px; padding: 1px 2px 0 3px; line-height: 40px; border-right: 2px solid #777; white-space: nowrap; overflow: hidden; }
th.center div { padding-left: 2px; text-align: center; }
th.right div { text-align: right; }
th:last-child { padding: 3px 0 0 3px; line-height: 40px; white-space: nowrap; }
td { padding: 2px 3px 0; border-top: 2px solid #fff; vertical-align: top; white-space: pre; }
tr:nth-child(even) td:not(.gutter) { background: #f7f7f7; background-clip: padding-box; }
td.gutter { border-right: 1px solid #696969; border-top: 0; }
td.title { padding-left: 4px; }
td.right { padding-right: 4px; text-align: right; }
td.state { padding: 5px 2px 0 0; }
td.state svg { margin: 0 auto; }
td.hints { overflow: hidden; }
.selected td:not(.gutter) { box-shadow: inset 0 4px #000, inset 0 -4px #000; }
.selected td.title { box-shadow: inset 0 4px #000, inset 0 -4px #000, inset 4px 0 #000; }
.vrail { display: flex; flex-direction: column; flex: none; width: 33px; }
.rail-head { flex: none; height: 48px; border-bottom: 2px solid #696969; }
.rail { display: flex; flex-direction: column; align-items: center; flex: 1; padding: 13px 0; background: #efefef; }
.thumb { width: 20px; height: 34px; margin: 12px 0 auto 0; background: #848484; }
.hrail { flex: none; height: 40px; padding: 8px 34px 0; background: #efefef; border-bottom: 6px solid #c0c0c0; }
.hrail i { display: block; width: 34px; height: 19px; background: #848484; }
.show-doc { flex: none; justify-content: center; gap: 60px; height: 34px; font-size: 27px; color: #808080; }

.splitter { display: flex; align-items: center; flex: none; width: 13px; background: #efefef; }
.splitter i { width: 13px; height: 142px; background: #c4c4c4; }

.sametime { display: flex; flex-direction: column; flex: none; width: 328px; border-left: 1px solid #d0d0d0; border-top: 2px solid #ddd; }
.pane-head { display: flex; align-items: center; flex: none; height: 49px; padding: 0 4px 2px 12px; background: #efefef; border-bottom: 2px solid #e0e0e0; }
.pane-head h3 { flex: 1; margin-left: 12px; font-size: 29px; white-space: nowrap; }
.person-search { display: flex; align-items: center; flex: none; height: 85px; padding: 0 10px 8px 18px; background: #efefef; }
.person-search input { flex: 1; height: 48px; margin: 0 20px 0 22px; padding: 0 34px 0 13px; border: 2px solid #aaa; border-radius: 5px; background: #fff; font-family: "Open Sans", "Noto Sans", sans-serif; font-size: 21px; }
.person-search input::placeholder { color: #444; opacity: 1; }
.person-search button { gap: 6px; }
.me { display: flex; flex: none; height: 122px; padding: 16px 22px 0 16px; }
.avatar { width: 92px; height: 92px; }
.me-text { flex: 1; margin-left: 16px; font-size: 21px; line-height: 24px; white-space: nowrap; }
.presence { display: flex; align-items: center; margin-top: 40px; font-family: "Open Sans", "Noto Sans", sans-serif; font-size: 21px; }
.presence span { flex: 1; margin-left: 15px; }
.presence .tri { margin-left: 5px; }
.square { width: 18px; height: 18px; border: 1px solid #7ab320; background: #9acd32; }
.pane-tools { display: flex; align-items: center; flex: none; height: 56px; padding: 0 0 0 24px; background: #efefef; border-top: 2px solid #a5b8c9; border-bottom: 2px solid #a5b8c9; font-size: 28px; }
.add { gap: 13px; margin-left: 20px; }
.more { flex: 1; gap: 13px; margin-left: 16px; }
.groups { flex: 1; padding: 12px 0 0 16px; }
.groups li { display: flex; align-items: center; height: 34px; font-size: 22px; }
.groups b { margin: 0 26px 0 17px; }
.groups span { padding-bottom: 2px; font-family: "Open Sans", "Noto Sans", sans-serif; font-size: 21px; }
.pane-scroll { flex: none; height: 33px; padding: 7px 34px; background: #efefef; }
.pane-scroll i { display: block; width: 180px; height: 19px; background: #848484; }
.pane-head.day { height: 56px; padding-bottom: 4px; border-top: 6px double #c0c0c0; }

.status { display: flex; flex: none; height: 38px; border-top: 3px solid #c0c0c0; justify-content: flex-end; font-size: 28px; }
.bell { padding: 4px 30px 0 0; }
.status-right { display: flex; align-items: center; width: 486px; padding: 6px 8px 0 220px; border-left: 2px solid #999; color: #333; }
.key { width: 40px; height: 22px; margin-right: 42px; }
.online { gap: 10px; margin-left: 43px; }
</style>
